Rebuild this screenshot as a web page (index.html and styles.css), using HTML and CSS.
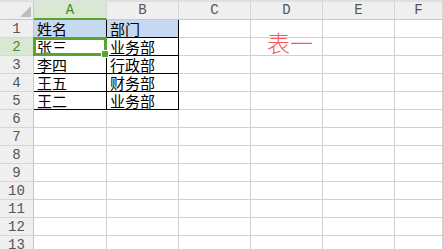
FILE: index.html
```html
<!DOCTYPE html>
<html lang="zh-CN">
<head>
    <meta charset="UTF-8">
    <title>表一</title>
    <link rel="stylesheet" href="styles.css">
</head>
<body>
<div class="sheet">
    <!-- 列标题 -->
    <div class="hd corner"><i class="tri"></i></div>
    <div class="hd col on">A</div>
    <div class="hd col">B</div>
    <div class="hd col">C</div>
    <div class="hd col">D</div>
    <div class="hd col">E</div>
    <div class="hd col">F</div>

    <div class="rh">1</div>
    <div class="c t fill">姓名</div>
    <div class="c t fill">部门</div>
    <div class="c"></div><div class="c"></div><div class="c"></div><div class="c"></div>

    <div class="rh on">2</div>
    <div class="c t sel">张三</div>
    <div class="c t">业务部</div>
    <div class="c"></div><div class="c"></div><div class="c"></div><div class="c"></div>

    <div class="rh">3</div>
    <div class="c t">李四</div>
    <div class="c t">行政部</div>
    <div class="c"></div><div class="c"></div><div class="c"></div><div class="c"></div>

    <div class="rh">4</div>
    <div class="c t">王五</div>
    <div class="c t">财务部</div>
    <div class="c"></div><div class="c"></div><div class="c"></div><div class="c"></div>

    <div class="rh">5</div>
    <div class="c t">王二</div>
    <div class="c t">业务部</div>
    <div class="c"></div><div class="c"></div><div class="c"></div><div class="c"></div>

    <div class="rh">6</div>
    <div class="c"></div><div class="c"></div><div class="c"></div><div class="c"></div><div class="c"></div><div class="c"></div>
    <div class="rh">7</div>
    <div class="c"></div><div class="c"></div><div class="c"></div><div class="c"></div><div class="c"></div><div class="c"></div>
    <div class="rh">8</div>
    <div class="c"></div><div class="c"></div><div class="c"></div><div class="c"></div><div class="c"></div><div class="c"></div>
    <div class="rh">9</div>
    <div class="c"></div><div class="c"></div><div class="c"></div><div class="c"></div><div class="c"></div><div class="c"></div>
    <div class="rh">10</div>
    <div class="c"></div><div class="c"></div><div class="c"></div><div class="c"></div><div class="c"></div><div class="c"></div>
    <div class="rh">11</div>
    <div class="c"></div><div class="c"></div><div class="c"></div><div class="c"></div><div class="c"></div><div class="c"></div>
    <div class="rh">12</div>
    <div class="c"></div><div class="c"></div><div class="c"></div><div class="c"></div><div class="c"></div><div class="c"></div>
    <div class="rh">13</div>
    <div class="c"></div><div class="c"></div><div class="c"></div><div class="c"></div><div class="c"></div><div class="c"></div>

    <!-- 文本框 -->
    <div class="note">表一</div>
</div>
</body>
</html>
```

FILE: styles.css
```css
*{
    padding: 0;
    margin: 0;
    box-sizing: border-box;
}
html,body{
    width: 443px;
    height: 249px;
    overflow: hidden;
    background: #fff;
}
.sheet{
    position: relative;
    display: grid;
    grid-template-columns: 34px 73px repeat(4, 72px) 1fr;
    grid-template-rows: 20px;
    grid-auto-rows: 18px;
    font-family: "Noto Sans CJK SC", sans-serif;
}
/* 表头 */
.hd{
    background: #efefef;
    border-top: 2px solid #e0e0e0;
    border-right: 1px solid #d6d6d6;
    border-bottom: 1px solid #c8c8c8;
    font-family: "Liberation Mono", monospace;
    font-size: 14px;
    line-height: 17px;
    color: #555;
    text-align: center;
}
.hd.on{
    background: #d8e8d2;
    border-bottom: 2px solid #5aa332;
    color: #3f8a2c;
}
.corner{
    display: flex;
    justify-content: flex-end;
    align-items: flex-end;
    padding: 0 2px 2px 0;
    border-right-color: #c8c8c8;
}
.tri{
    width: 11px;
    height: 11px;
    background: #bdbdbd;
    clip-path: polygon(100% 0, 100% 100%, 0 100%);
}
/* 行号 */
.rh{
    background: #efefef;
    border-right: 1px solid #c8c8c8;
    border-bottom: 1px solid #d6d6d6;
    font-family: "Liberation Mono", monospace;
    font-size: 14px;
    line-height: 18px;
    color: #555;
    text-align: center;
}
.rh.on{
    background: #d8e8d2;
    color: #3f8a2c;
}
/* 单元格 */
.c{
    border-right: 1px solid #d0d0d0;
    border-bottom: 1px solid #d0d0d0;
    font-size: 15px;
    line-height: 17px;
    padding-left: 3px;
    color: #000;
    white-space: nowrap;
}
.c.t{
    border-right-color: #000;
    border-bottom-color: #000;
}
.c.fill{
    background: #c6d9f0;
}
.c.sel{
    position: relative;
    z-index: 1;
}
.c.sel:after{
    content: '';
    position: absolute;
    left: -1px;
    top: -1px;
    right: -1px;
    bottom: -1px;
    border: 3px solid #5aa332;
}
.c.sel:before{
    content: '';
    position: absolute;
    right: -3px;
    bottom: -3px;
    width: 6px;
    height: 6px;
    background: #5aa332;
    border: 1px solid #fff;
    z-index: 1;
}
/* 浮动文本框 */
.note{
    position: absolute;
    left: 267px;
    top: 28px;
    font-size: 23px;
    font-weight: 300;
    line-height: 28px;
    color: #f55a5a;
    z-index: 2;
}
```
